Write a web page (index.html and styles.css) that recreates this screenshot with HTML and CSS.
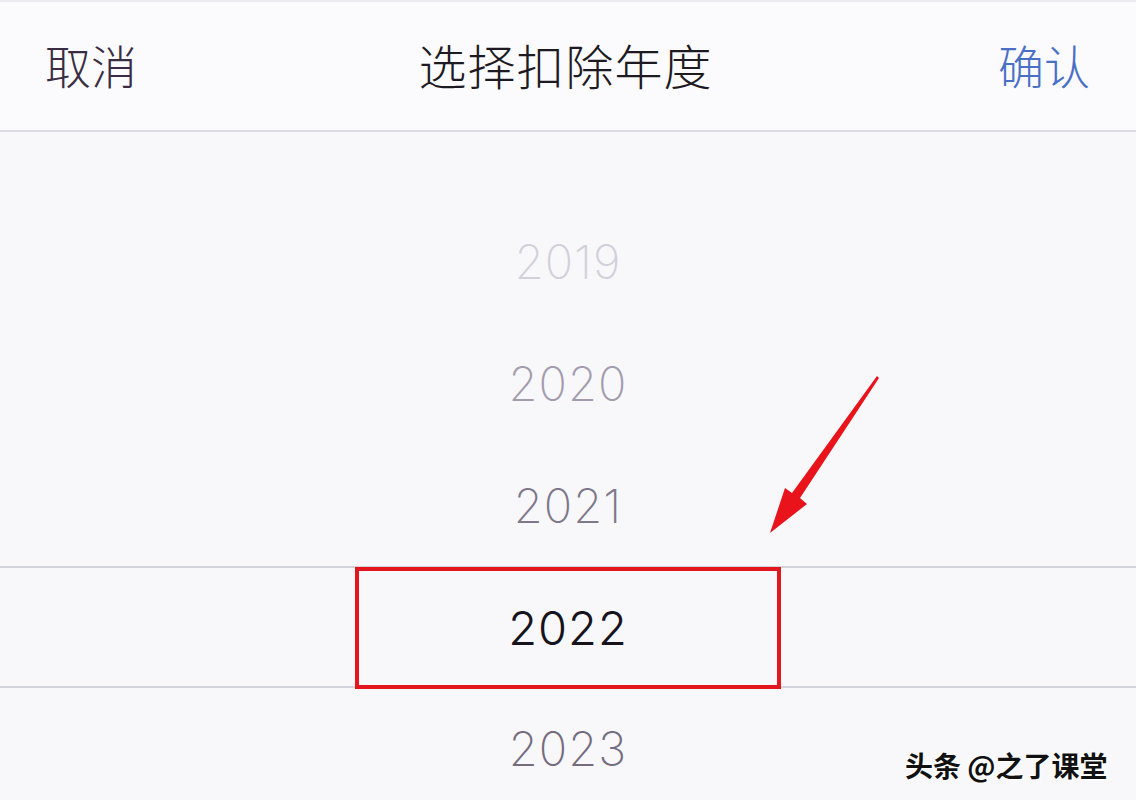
FILE: index.html
```html
<!DOCTYPE html>
<html>
<head>
	<meta charset="utf-8">
	<meta name="viewport" content="width=device-width"/>
	<link rel="stylesheet" href="styles.css">
</head>
<body>
<div class="body">
	<div class="head">
		<span class="cancel">取消</span>
		<span class="title">选择扣除年度</span>
		<span class="confirm">确认</span>
	</div>
	<div class="picker">
		<div class="year far">2019</div>
		<div class="year mid">2020</div>
		<div class="year near">2021</div>
		<div class="selected">
			<div class="mark">2022</div>
		</div>
		<div class="year near2">2023</div>
	</div>
	<svg class="arrow" width="1136" height="800" viewBox="0 0 1136 800">
		<polygon points="770,533 807,504 800,498 879,378 877,376 792,493 785,488" fill="#e8131b"/>
	</svg>
	<div class="watermark">头条 @之了课堂</div>
</div>
</body>
</html>
```

FILE: styles.css
```css
* {
	padding: 0;
	margin: 0;
}

body {
	background: #f8f8fb;
	font-family: "Noto Sans CJK SC", sans-serif;
}

.body {
	position: relative;
	width: 1136px;
	height: 800px;
	overflow: hidden;
	border-top: 2px solid #ebebf0;
	box-sizing: border-box;
}

.head {
	height: 124px;
	display: flex;
	align-items: center;
	justify-content: space-between;
	padding: 0 46px 4px 45px;
	background: #fbfbfe;
	border-bottom: 2px solid #dcdce4;
	font-size: 46px;
	font-weight: 300;
}

.cancel {
	color: #3a2c42;
}

.title {
	color: #1e1a22;
	font-size: 48px;
	letter-spacing: 1px;
	padding-right: 4px;
}

.confirm {
	color: #4a70c6;
}

.picker {
	padding-top: 69px;
	font-family: Inter, Lato, sans-serif;
	font-size: 47px;
	text-align: center;
}

.year {
	height: 122px;
	line-height: 122px;
	font-weight: 250;
	letter-spacing: 1px;
}

.far {
	color: #d2d0da;
}

.mid {
	color: #a39cad;
}

.near {
	color: #7f778a;
	height: 121px;
}

.near2 {
	color: #746c7e;
}

.selected {
	height: 118px;
	border-top: 2px solid #d2d2da;
	border-bottom: 2px solid #d2d2da;
}

.mark {
	width: 418px;
	height: 114px;
	margin: -1px auto 0;
	border: 4px solid #e3161e;
	line-height: 114px;
	color: #17131c;
	font-weight: 350;
	letter-spacing: 1px;
}

.arrow {
	position: absolute;
	left: 0;
	top: -2px;
	pointer-events: none;
}

.watermark {
	position: absolute;
	left: 905px;
	top: 743px;
	font-size: 28px;
	font-weight: 700;
	color: #111;
	text-shadow: 1px 1px 0 #fff, -1px -1px 0 #fff;
	white-space: nowrap;
}
```
